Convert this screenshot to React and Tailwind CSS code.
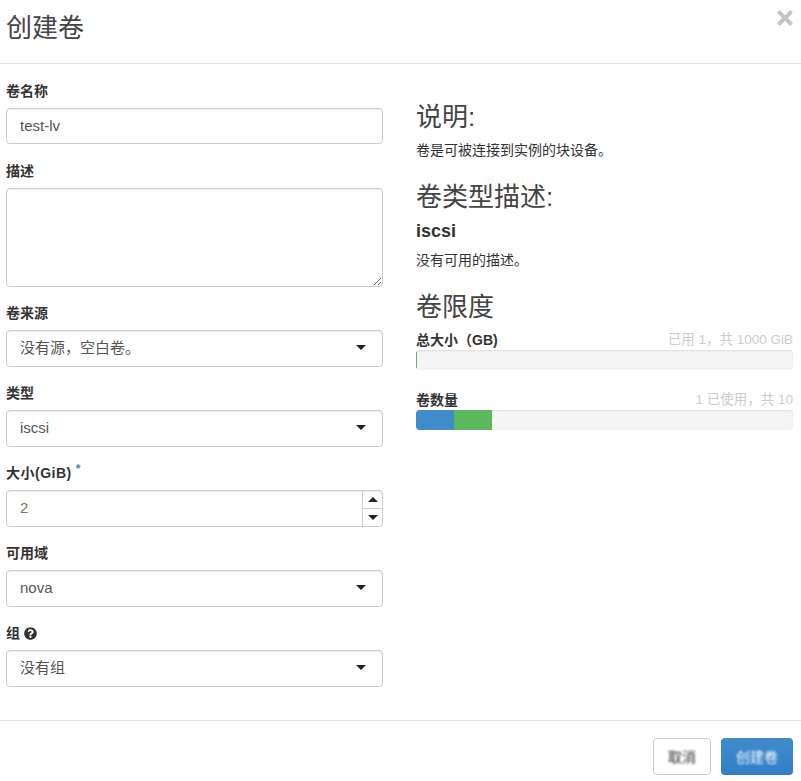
import React from "react";
import { FaTimes, FaQuestionCircle } from "react-icons/fa";

const font = { fontFamily: '"Liberation Sans","Noto Sans CJK SC",sans-serif' };

function Label({ children }) {
  return <label className="flex h-5 items-center gap-1 mb-[7px] text-sm leading-5 font-bold text-[#333]">{children}</label>;
}

function Caret() {
  return <span className="w-0 h-0 border-x-[5px] border-x-transparent border-t-[5px] border-t-[#222]" />;
}

function Select({ value }) {
  return (
    <div className="relative mb-4">
      <select
        defaultValue={value}
        className="block w-full h-[37px] appearance-none rounded border border-[#ccc] bg-white pl-[13px] pr-8 pb-0.5 text-[15px] text-[#555] shadow-[inset_0_1px_1px_rgba(0,0,0,0.075)]"
      >
        <option>{value}</option>
      </select>
      <span className="absolute right-[17px] top-[15px] flex">
        <Caret />
      </span>
    </div>
  );
}

function Quota({ name, used, children }) {
  return (
    <div className="mb-5">
      <div className="flex justify-between h-5 items-center text-sm leading-5">
        <span className="font-bold text-[#333]">{name}</span>
        <span className="text-[13.5px] text-[#ccc]">{used}</span>
      </div>
      <div className="flex h-5 overflow-hidden rounded bg-[#f5f5f5] shadow-[inset_0_1px_2px_rgba(0,0,0,0.1)]">{children}</div>
    </div>
  );
}

export default function App() {
  return (
    <div style={font} className="w-[801px] h-[781px] bg-white text-sm text-[#333] overflow-hidden">
      <header className="relative h-16 border-b border-[#e5e5e5] pl-1.5 pt-[9px]">
        <h4 className="text-[26px] leading-[38px] text-[#444]">创建卷</h4>
        <span className="absolute right-[5px] top-[7px] text-[#c4c4c4] text-[22px]">
          <FaTimes />
        </span>
      </header>

      <main className="flex h-[657px] gap-[33px] pl-1.5 pr-2 pt-[17px] border-b border-[#e5e5e5]">
        <form className="w-[377px]">
          <Label>卷名称</Label>
          <input
            defaultValue="test-lv"
            className="block w-full h-9 mb-[17px] rounded border border-[#ccc] bg-white px-[13px] pb-0.5 text-[15px] text-[#555] shadow-[inset_0_1px_1px_rgba(0,0,0,0.075)]"
          />
          <Label>描述</Label>
          <textarea className="block w-full h-[99px] mb-4 rounded border border-[#ccc] bg-white shadow-[inset_0_1px_1px_rgba(0,0,0,0.075)]" />
          <Label>卷来源</Label>
          <Select value="没有源，空白卷。" />
          <Label>类型</Label>
          <Select value="iscsi" />
          <Label>
            <span className="tracking-[0.5px]">大小(GiB)</span>
            <span className="text-[#428bca] text-xs leading-none -mt-2">*</span>
          </Label>
          <div className="flex h-[37px] mb-4 rounded border border-[#ccc] bg-white shadow-[inset_0_1px_1px_rgba(0,0,0,0.075)] overflow-hidden">
            <input defaultValue="2" className="min-w-0 flex-1 bg-transparent px-[13px] pb-0.5 text-[15px] text-[#7d7660]" />
            <div className="flex w-5 flex-col border-l border-[#ccc]">
              <span className="flex flex-1 items-center justify-center border-b border-[#ccc]">
                <span className="w-0 h-0 border-x-[5px] border-x-transparent border-b-[5px] border-b-[#222]" />
              </span>
              <span className="flex flex-1 items-center justify-center">
                <Caret />
              </span>
            </div>
          </div>
          <Label>可用域</Label>
          <Select value="nova" />
          <Label>
            <span>组</span>
            <FaQuestionCircle className="text-[13px] text-[#333]" />
          </Label>
          <Select value="没有组" />
        </form>

        <aside className="w-[377px] pt-[18px]">
          <h3 className="text-[26px] leading-[36px] text-[#444] mb-[5px]">说明:</h3>
          <p className="text-sm leading-5 text-[#333] mb-[19px]">卷是可被连接到实例的块设备。</p>
          <h3 className="text-[26px] leading-[36px] text-[#444] mb-1.5">卷类型描述:</h3>
          <h4 className="text-lg leading-5 font-bold text-[#333] mb-[9px]">iscsi</h4>
          <p className="text-sm leading-5 text-[#333] mb-[19px]">没有可用的描述。</p>
          <h3 className="text-[26px] leading-[36px] text-[#444] mb-[5px]">卷限度</h3>
          <Quota name="总大小（GB)" used="已用 1，共 1000 GiB">
            <div className="w-px bg-[#5cb85c]" />
          </Quota>
          <Quota name="卷数量" used="1 已使用，共 10">
            <div className="w-[38px] bg-[#428bca]" />
            <div className="w-[38px] bg-[#5cb85c]" />
          </Quota>
        </aside>
      </main>

      <footer className="flex justify-end gap-2.5 pt-[17px] pr-2">
        <button className="h-[37px] w-[58px] rounded border border-[#ccc] bg-white text-sm text-[#333]">
          <span className="inline-block blur-[1px]">取消</span>
        </button>
        <button className="h-[37px] w-[72px] rounded bg-gradient-to-b from-[#428bca] to-[#2f7fc8] text-sm text-white">
          <span className="inline-block blur-[1px]">创建卷</span>
        </button>
      </footer>
    </div>
  );
}
